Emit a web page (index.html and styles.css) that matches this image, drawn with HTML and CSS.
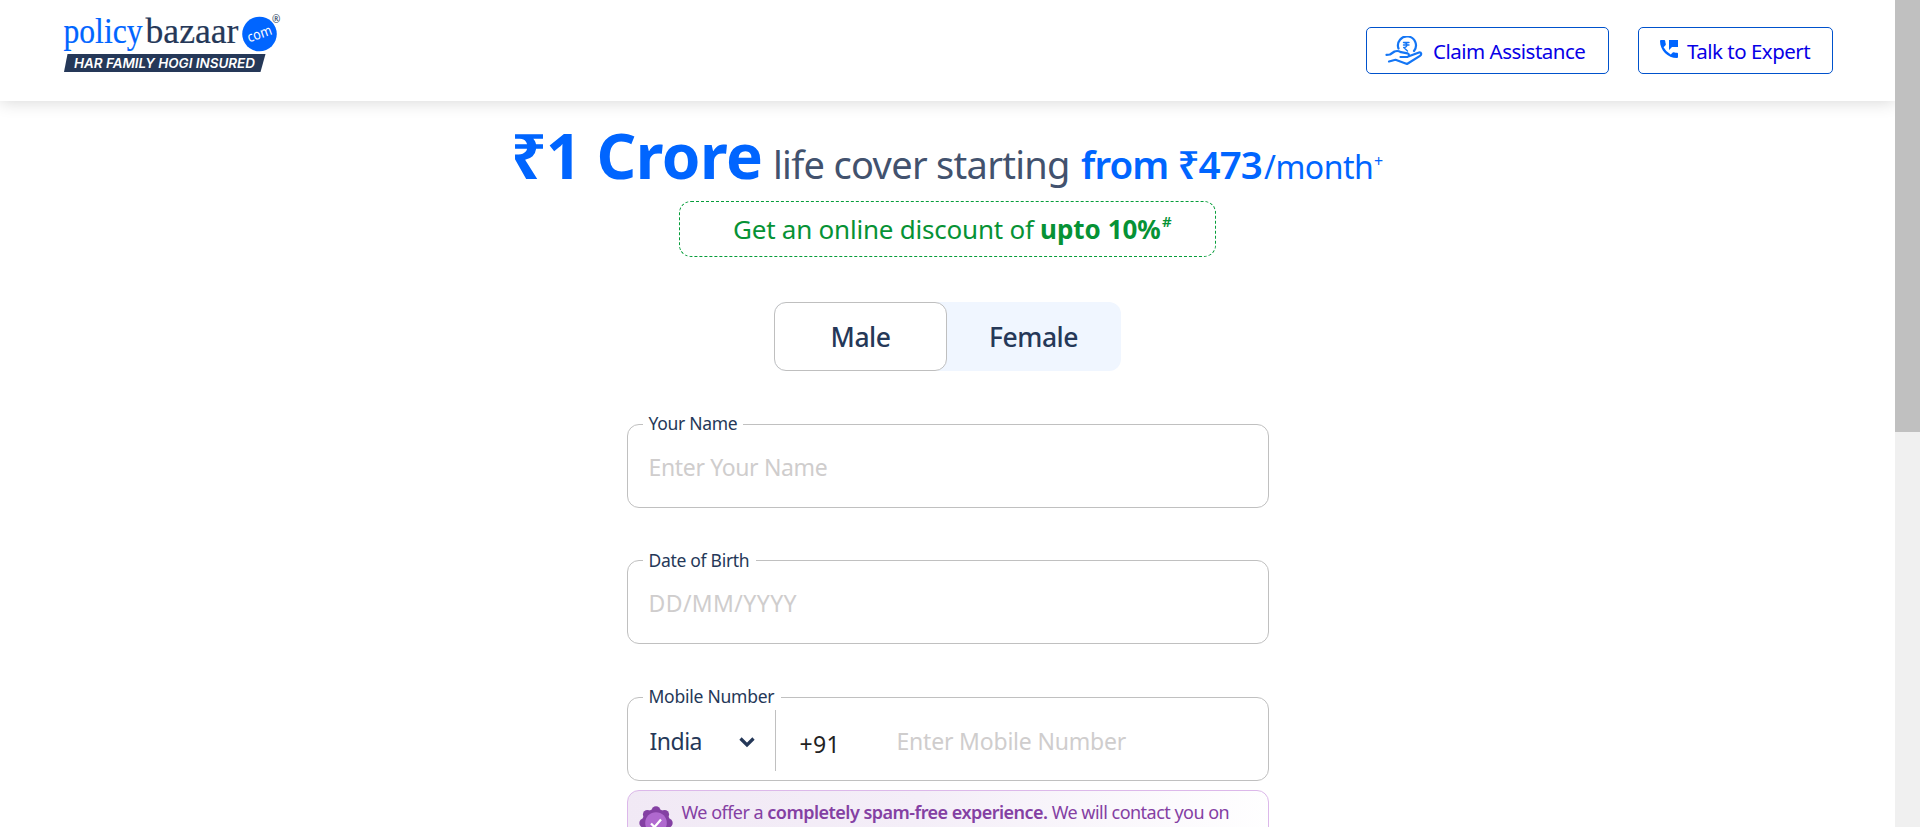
FILE: index.html
```html
<!DOCTYPE html>
<html lang="en">
<head>
<meta charset="utf-8">
<title>Term Insurance</title>
<link rel="stylesheet" href="styles.css">
</head>
<body>
<div class="page">
  <header class="header">
    <svg class="logo" width="222" height="66" viewBox="0 0 222 66">
      <g class="logo-word">
        <text class="logo-policy" x="1.500" y="32.500" textLength="79" lengthAdjust="spacingAndGlyphs">policy</text>
        <text class="logo-bazaar" x="83.500" y="32.500" textLength="93" lengthAdjust="spacingAndGlyphs">bazaar</text>
      </g>
      <circle cx="197.500" cy="24" r="17.300" fill="#0065ff"/>
      <text class="logo-com" x="-12.500" y="4.500" textLength="25" lengthAdjust="spacingAndGlyphs" transform="translate(197.500 24) rotate(-20)">com</text>
      <text class="logo-reg" x="210" y="12.500">®</text>
      <path d="M5.500 44H203.500L198.500 62H2Z" fill="#253858"/>
      <text class="logo-tag" x="12" y="57.500" textLength="181" lengthAdjust="spacingAndGlyphs">HAR FAMILY HOGI INSURED</text>
    </svg>
    <nav class="actions">
      <a class="btn btn-claim">
        <svg class="icon-claim" width="38" height="30" viewBox="0 0 38 30" fill="none" stroke="#1476f5" stroke-width="2.200" stroke-linecap="round" stroke-linejoin="round">
          <path d="M13.500 12.500A9 9 0 1 1 29 15"/>
          <path d="M18.500 6.500H24M18.500 9H24M18.500 6.500C23 6.500 23 11.500 18.700 11.500L22.500 15" stroke-width="1.400"/>
          <path d="M1.500 18.800L5 18.500 9.500 15.500C12 14.500 14 15 16 16.200L22.500 17.300C24.500 18 24.500 20.500 22.500 20.800L15.500 21"/>
          <path d="M24.500 20L34 16.500C36.500 16.200 37 18.500 35 19.800L22 28 10.500 23.800 4 25.500"/>
        </svg>
        <span class="t-claim">Claim Assistance</span>
      </a>
      <a class="btn btn-talk">
        <svg class="icon-talk" width="18" height="18" viewBox="0 0 18 18" fill="#0065ff">
          <path d="M9 0H18V7H12L9 10Z"/>
          <path d="M1 0H4.200Q5.100 0 5.200 .9Q5.300 2.500 5.800 4.100Q6 4.800 5.500 5.300L3.600 7.200Q6 12 10.800 14.400L12.700 12.500Q13.200 12 13.900 12.200Q15.500 12.700 17.100 12.800Q18 12.900 18 13.800V17Q18 18 17 18C7.600 18 0 10.400 0 1Q0 0 1 0Z"/>
        </svg>
        <span class="t-talk">Talk to Expert</span>
      </a>
    </nav>
  </header>

  <main class="main">
    <h1 class="headline">
      <span class="h-crore">₹1 Crore</span>
      <span class="h-life">life cover starting</span>
      <span class="h-from">from ₹473</span>
      <span class="h-month">/month</span>
      <span class="h-plus">+</span>
    </h1>

    <div class="discount"><span class="d-text">Get an online discount of</span><b class="d-upto">upto 10%</b><span class="d-hash">#</span></div>

    <div class="gender">
      <div class="gender-option is-active">Male</div>
      <div class="gender-option gender-female">Female</div>
    </div>

    <form class="form">
      <div class="field">
        <label class="label l-name">Your Name</label>
        <span class="placeholder p-name">Enter Your Name</span>
      </div>
      <div class="field field-dob">
        <label class="label l-dob">Date of Birth</label>
        <span class="placeholder p-dob">DD/MM/YYYY</span>
      </div>
      <div class="field field-mobile">
        <label class="label l-mobile">Mobile Number</label>
        <div class="country">
          <span class="c-name">India</span>
          <svg class="chevron" width="16" height="11" viewBox="0 0 16 11" fill="none" stroke="#253858" stroke-width="3.200"><path d="M1.500 1.500L8 8 14.500 1.500"/></svg>
        </div>
        <span class="dial">+91</span>
        <span class="placeholder p-mobile">Enter Mobile Number</span>
      </div>
      <div class="notice">
        <svg class="badge" width="34" height="34" viewBox="0 0 34 34">
          <g fill="#8440a3"><circle cx="17" cy="17" r="14"/><circle cx="17" cy="4.800" r="4.500"/><circle cx="25.600" cy="8.400" r="4.500"/><circle cx="29.200" cy="17" r="4.500"/><circle cx="25.600" cy="25.600" r="4.500"/><circle cx="17" cy="29.200" r="4.500"/><circle cx="8.400" cy="25.600" r="4.500"/><circle cx="4.800" cy="17" r="4.500"/><circle cx="8.400" cy="8.400" r="4.500"/></g>
          <circle cx="17" cy="17" r="10.800" fill="#b069cf"/>
          <path d="M12 17.500L15.500 21 22 13.500" fill="none" stroke="#fff" stroke-width="2.300"/>
        </svg>
        <p class="notice-text">We offer a <b>completely spam-free experience.</b> We will contact you on</p>
      </div>
    </form>
  </main>
</div>
<div class="scrollbar"><div class="thumb"></div></div>
</body>
</html>
```
FILE: styles.css
```css
* { box-sizing: border-box; }
body {
  margin: 0;
  height: 827px;
  display: flex;
  overflow: hidden;
  background: #fff;
  color: #253858;
  font-family: "Noto Sans", "Open Sans", sans-serif;
}
.page { flex: 1; height: 827px; overflow: hidden; }
.scrollbar { width: 25px; height: 827px; background: #f0f0f0; }
.thumb { height: 432px; background: #c0c0c0; }

.header {
  height: 101px;
  display: flex;
  justify-content: space-between;
  align-items: flex-start;
  padding: 10px 62px 0;
  box-shadow: 0 1px 16px rgba(0, 0, 0, .16);
}
.logo { display: block; overflow: visible; }
.logo-word { font-family: "Liberation Serif", serif; font-size: 35px; stroke-width: .2px; }
.logo-policy { fill: #0065ff; stroke: #0065ff; }
.logo-bazaar { fill: #253858; stroke: #253858; }
.logo-com { font-size: 14px; fill: #fff; }
.logo-reg { font-size: 10px; fill: #253858; }
.logo-tag { font: italic 600 13px "Inter", sans-serif; fill: #fff; }

.actions { display: flex; gap: 29px; padding-top: 17px; }
.btn {
  height: 47px;
  display: flex;
  align-items: center;
  border: 1px solid #0052cc;
  border-radius: 5px;
  color: #0800e6;
  font-size: 20.500px;
  line-height: 47px;
  white-space: nowrap;
}
.btn-claim { width: 243px; padding-left: 18px; gap: 10px; }
.btn-talk { width: 195px; padding-left: 21px; gap: 9px; }
.icon-talk { margin-bottom: 4px; }
.t-claim,
.t-talk { padding-top: 1px; letter-spacing: -.5px; }

.main { display: flex; flex-direction: column; align-items: center; }
.headline {
  display: flex;
  align-items: baseline;
  align-self: flex-start;
  height: 62px;
  margin: 23px 0 0 511px;
  font-weight: 400;
  line-height: 62px;
  white-space: nowrap;
  color: #0065ff;
}
.h-crore { width: 262px; font-size: 62px; font-weight: 700; letter-spacing: -.5px; }
.h-life { width: 308px; font-size: 38px; color: #42526e; letter-spacing: -.7px; }
.h-from { width: 183px; font-size: 38.500px; font-weight: 600; letter-spacing: -.9px; }
.h-month { width: 110px; font-size: 32px; letter-spacing: -.5px; }
.h-plus { font-size: 16px; line-height: 14px; transform: translateY(-12px); }

.discount {
  display: flex;
  align-items: center;
  width: 537px;
  height: 56px;
  margin-top: 15px;
  padding-left: 53px;
  border: 1px dashed #069d3a;
  border-radius: 12px;
  color: #069235;
  font-size: 26px;
  white-space: nowrap;
}
.d-text { width: 307px; letter-spacing: -.22px; }
.d-upto { width: 122px; letter-spacing: 0; }
.d-hash { font-size: 15px; font-weight: 600; padding-bottom: 17px; }

.gender {
  display: flex;
  width: 347px;
  height: 69px;
  margin-top: 45px;
  border-radius: 12px;
  background: #f0f6ff;
}
.gender-option {
  width: 173px;
  border: 1px solid transparent;
  border-radius: 12px;
  font-size: 26.500px;
  font-weight: 500;
  line-height: 69px;
  text-align: center;
  letter-spacing: -.5px;
}
.is-active { border-color: #bfbfbf; background: #fff; }

.form { width: 642px; margin-top: 53px; }
.field {
  position: relative;
  display: flex;
  align-items: center;
  height: 84px;
  padding-left: 21px;
  border: 1px solid #c0c0c0;
  border-radius: 12px;
  white-space: nowrap;
}
.field-dob { margin-top: 52px; }
.field-mobile { margin-top: 53px; padding-left: 0; }
.label {
  position: absolute;
  left: 15px;
  top: -14px;
  height: 24px;
  padding-left: 6px;
  background: #fff;
  font-size: 17.500px;
  line-height: 24px;
}
.l-name { width: 100px; letter-spacing: -.3px; }
.l-dob { top: -13px; width: 113px; letter-spacing: -.3px; }
.l-mobile { width: 138px; letter-spacing: -.25px; }
.placeholder { padding-top: 2px; color: #cfcdcd; font-size: 23px; }
.p-name { letter-spacing: -.35px; }
.p-dob { letter-spacing: .4px; }
.p-mobile { padding-top: 4px; letter-spacing: -.2px; }
.country {
  display: flex;
  align-items: center;
  justify-content: space-between;
  width: 148px;
  height: 61px;
  margin-top: 3px;
  padding: 1px 20px 0 22px;
  border-right: 1px solid #c0c0c0;
  font-size: 23px;
}
.c-name { letter-spacing: -.5px; }
.chevron { margin-top: 3px; }
.dial {
  width: 121px;
  padding: 9px 0 0 24px;
  color: #222;
  font-size: 23px;
  letter-spacing: .3px;
}

.notice {
  display: flex;
  align-items: flex-start;
  gap: 9px;
  height: 78px;
  margin-top: 9px;
  padding: 15px 0 0 11px;
  border: 1px solid #dcb8ea;
  border-radius: 12px;
  background: linear-gradient(100deg, #f1e9f5, #f4eef8 45%, #fff);
  color: #8440a3;
}
.badge { flex: none; }
.notice-text {
  margin: -6px 0 0;
  font-size: 18px;
  line-height: 25px;
  letter-spacing: -.52px;
  white-space: nowrap;
}
.notice-text b { font-weight: 600; }
```
